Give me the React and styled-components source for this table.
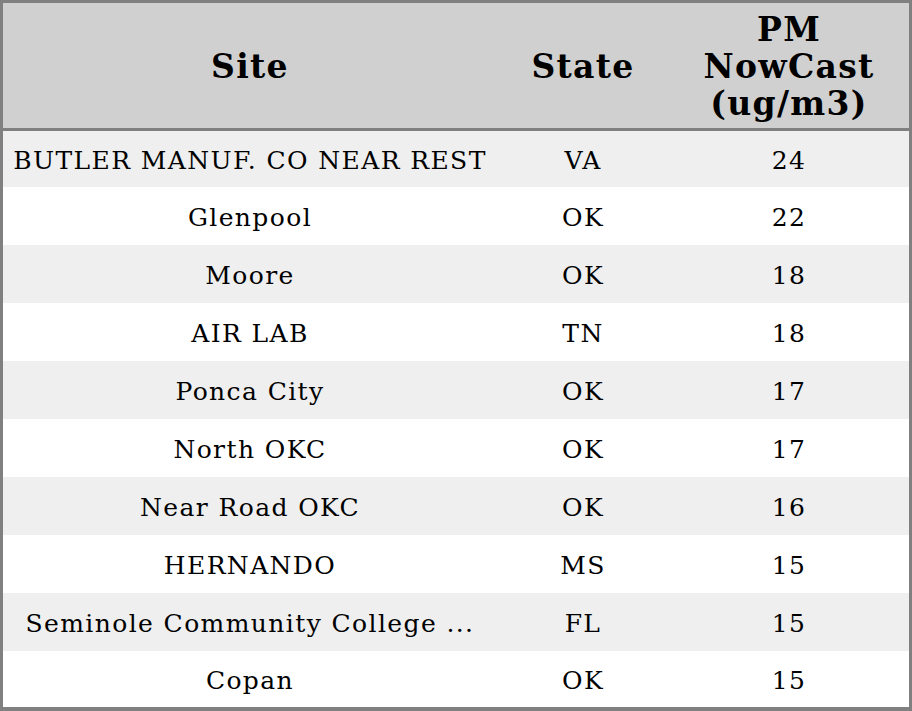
import styled, { createGlobalStyle } from 'styled-components';

const rows = [
	{ site: 'BUTLER MANUF. CO NEAR REST', state: 'VA', pm: 24 },
	{ site: 'Glenpool', state: 'OK', pm: 22 },
	{ site: 'Moore', state: 'OK', pm: 18 },
	{ site: 'AIR LAB', state: 'TN', pm: 18 },
	{ site: 'Ponca City', state: 'OK', pm: 17 },
	{ site: 'North OKC', state: 'OK', pm: 17 },
	{ site: 'Near Road OKC', state: 'OK', pm: 16 },
	{ site: 'HERNANDO', state: 'MS', pm: 15 },
	{ site: 'Seminole Community College ...', state: 'FL', pm: 15 },
	{ site: 'Copan', state: 'OK', pm: 15 },
];

const GlobalStyle = createGlobalStyle`
	html, body {
		margin: 0;
		padding: 0;
		background: #fff;
	}
	body {
		font-family: 'DejaVu Serif', 'Liberation Serif', serif;
		color: #000;
	}
`;

export default function App() {
	return (
		<>
			<GlobalStyle />
			<Table>
				<colgroup>
					<col style={{ width: 494 }} />
					<col style={{ width: 172 }} />
					<col style={{ width: 240 }} />
				</colgroup>
				<thead>
					<tr>
						<Th>Site</Th>
						<Th>State</Th>
						<Th>PM NowCast (ug/m3)</Th>
					</tr>
				</thead>
				<tbody>
					{rows.map((r, i) => (
						<Row key={i} $striped={i % 2 === 0}>
							<Td>{r.site}</Td>
							<Td>{r.state}</Td>
							<Td>{r.pm}</Td>
						</Row>
					))}
				</tbody>
			</Table>
		</>
	);
}

const Table = styled.table`
	width: 912px;
	table-layout: fixed;
	border-collapse: separate;
	border-spacing: 0;
	border: 3px solid #808080;
	border-bottom-width: 4px;
	font-family: 'DejaVu Serif', 'Liberation Serif', serif;
`;

const Th = styled.th`
	height: 124px;
	padding: 1px 10px 0;
	background: #d0d0d0;
	border-bottom: 3px solid #808080;
	font: bold 33px/37px 'DejaVu Serif', 'Liberation Serif', serif;
	letter-spacing: 1.3px;
	text-align: center;
	vertical-align: middle;
	box-sizing: content-box;
`;

const Row = styled.tr`
	background: ${(p) => (p.$striped ? '#efefef' : '#ffffff')};

	td {
		height: 58px;
	}

	&:first-child td,
	&:last-child td {
		height: 56px;
	}
`;

const Td = styled.td`
	padding: 3px 2px 0;
	font: 25px/1.2 'DejaVu Serif', 'Liberation Serif', serif;
	letter-spacing: 1.4px;
	text-align: center;
	vertical-align: middle;
	white-space: nowrap;
	box-sizing: border-box;
`;
